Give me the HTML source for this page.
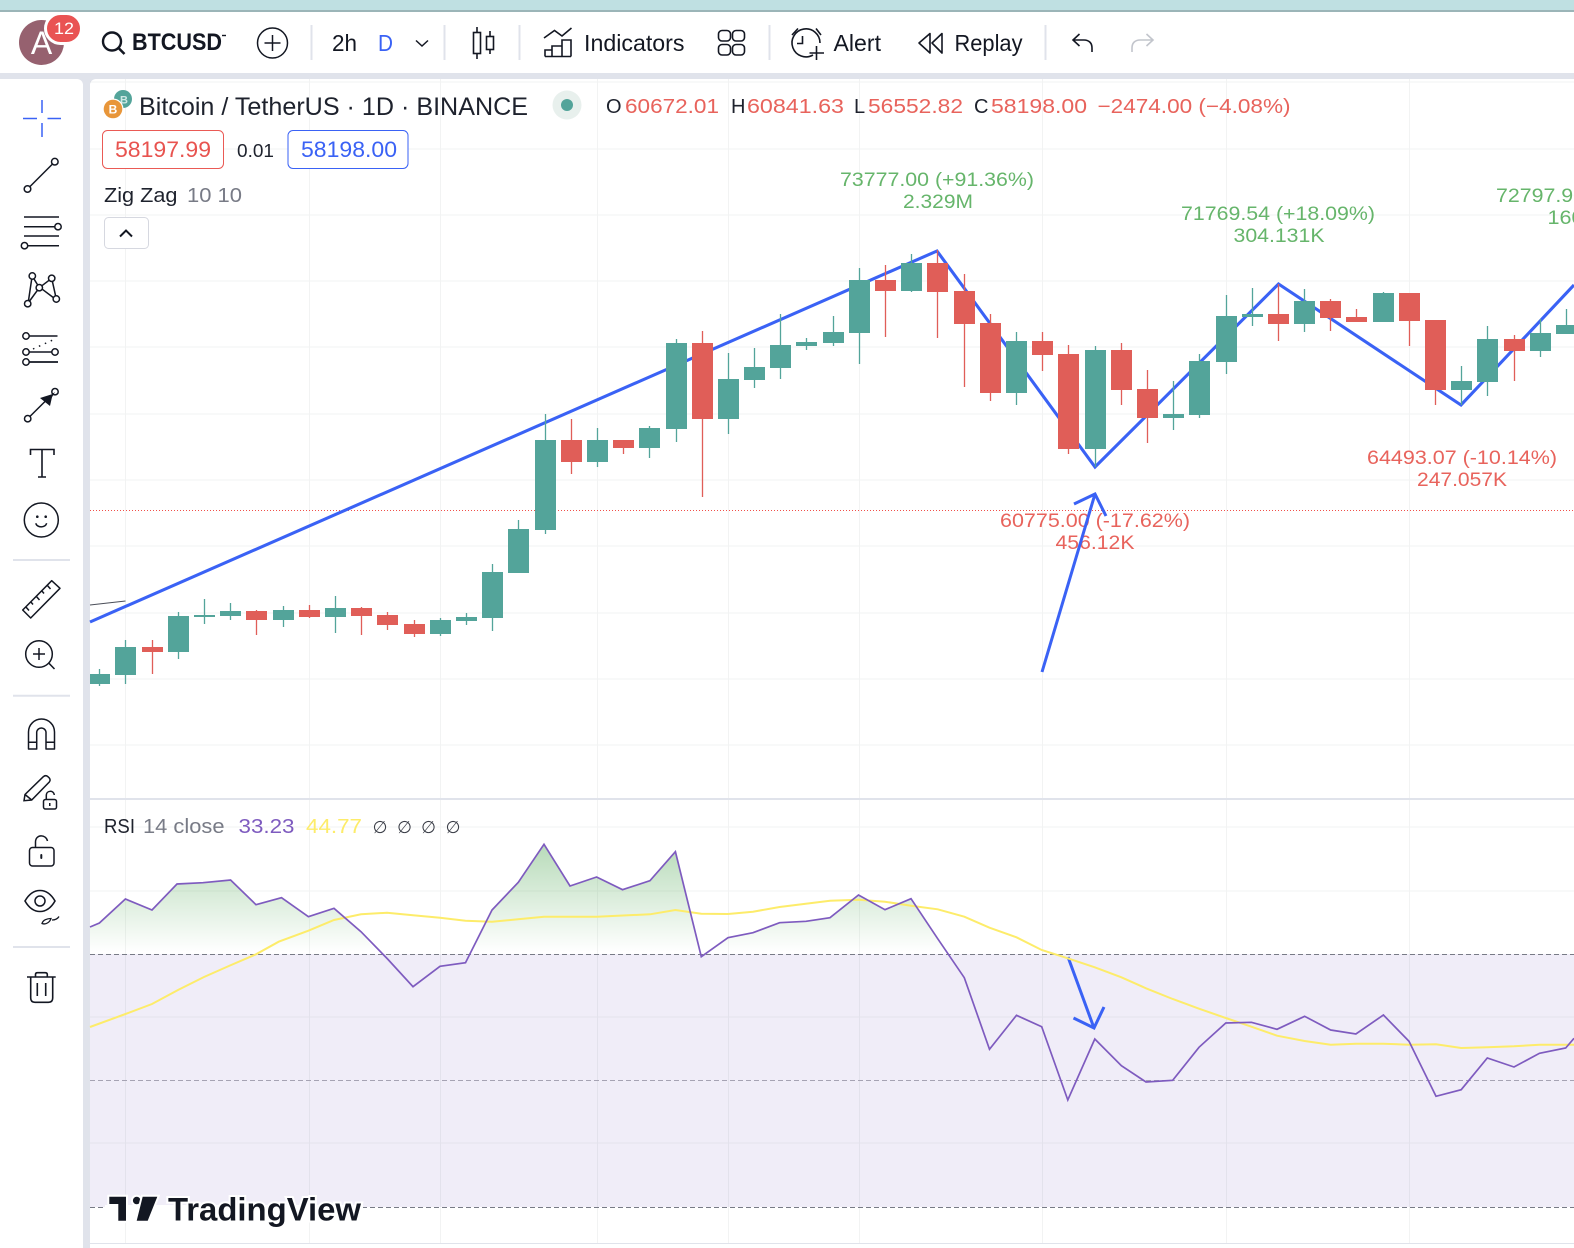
<!DOCTYPE html>
<html><head><meta charset="utf-8"><title>BTCUSD</title>
<style>html,body{margin:0;padding:0;background:#fff;width:1574px;height:1248px;overflow:hidden}svg{display:block}text{font-family:"Liberation Sans",sans-serif}</style></head>
<body>
<svg width="1574" height="1248" viewBox="0 0 1574 1248" xmlns="http://www.w3.org/2000/svg">
<defs><linearGradient id="g" gradientUnits="userSpaceOnUse" x1="0" y1="844" x2="0" y2="952"><stop offset="0" stop-color="#43a047" stop-opacity=".38"/><stop offset="1" stop-color="#43a047" stop-opacity="0"/></linearGradient></defs>
<rect width="1574" height="1248" fill="#fff"/>
<rect width="1574" height="10" fill="#bfe0e2"/><rect y="10" width="1574" height="2" fill="#9bb5b8"/>
<rect y="73" width="1574" height="1175" fill="#e0e3eb"/>
<path d="M0 79H77a6 6 0 0 1 6 6V1248H0Z" fill="#fff"/>
<path d="M90 1248V85a6 6 0 0 1 6-6H1574V1248Z" fill="#fff"/>

<!-- RSI band -->
<rect x="90" y="954" width="1484" height="253" fill="#f0edf8"/>
<!-- grid -->
<path d="M90 82H1574M90 149H1574M90 215H1574M90 281H1574M90 347H1574M90 414H1574M90 480H1574M90 546H1574M90 613H1574M90 679H1574M90 745H1574M90 827H1574M90 891H1574M90 1017H1574M90 1143H1574M125.5 79V1243M309.5 79V1243M440.5 79V1243M597.5 79V1243M728.5 79V1243M859.5 79V1243M1042.5 79V1243M1226.5 79V1243M1409.5 79V1243" stroke="#2a2e39" stroke-opacity=".06" stroke-width="1" fill="none"/>
<rect x="90" y="798" width="1484" height="2" fill="#e0e3eb"/>
<rect x="90" y="1243" width="1484" height="1" fill="#e0e3eb"/>
<path d="M90 510.5H1574" stroke="#f0504a" stroke-width="1" stroke-dasharray="1 2" fill="none"/>
<path d="M90 954.5H1574M90 1207.5H1574" stroke="#787b86" stroke-width="1" stroke-dasharray="5 3" fill="none"/>
<path d="M90 1080.5H1574" stroke="#a6a3b3" stroke-width="1" stroke-dasharray="5 3" fill="none"/>

<!-- zigzag -->
<path d="M90 605L125.5 601" stroke="#4a4e58" stroke-width="1" fill="none"/>
<polyline points="90,622 937,251 1095,467 1278.5,284 1461,405 1574,285" fill="none" stroke="#3a62f5" stroke-width="3.1" stroke-linejoin="miter"/>

<!-- candles: wicks -->
<path stroke="#53a49a" stroke-width="1.3" fill="none" d="M99.5 669V686M125.5 640V684M178.5 612V659M204.5 599V624M230.5 603V620M283.5 606V627M335.5 596V633M440.5 618V636M466.5 613V625M492.5 564V631M518.5 520V573M545.5 414V534M597.5 428V467M649.5 426V458M676.5 339V442M728.5 353V434M754.5 348V388M780.5 314V379M806.5 338V350M833.5 316V346M859.5 268V364M911.5 254V292M1016.5 332V405M1095.5 346V467M1173.5 381V430M1199.5 354V418M1226.5 295V374M1252.5 288V326M1304.5 289V332M1383.5 292V322M1461.5 366V405M1487.5 326V396M1540.5 319V357M1566.5 309V334"/>
<path stroke="#e05e58" stroke-width="1.3" fill="none" d="M152.5 640V674M256.5 610V635M309.5 605V618M361.5 607V635M387.5 612V630M414.5 620V637M571.5 419V474M623.5 440V454M702.5 331V497M885.5 265V337M937.5 250V338M964.5 274V387M990.5 314V401M1042.5 332V371M1068.5 345V454M1121.5 343V405M1147.5 370V443M1278.5 284V341M1330.5 299V331M1356.5 309V322M1409.5 293V346M1435.5 320V405M1514.5 335V381"/>
<!-- candles: bodies -->
<path fill="#53a49a" d="M90 674h20v10h-20zM115 647h21v28h-21zM168 616h21v36h-21zM194 615h21v2h-21zM220 611h21v5h-21zM273 610h21v10h-21zM325 608h21v9h-21zM430 620h21v14h-21zM456 617h21v4h-21zM482 572h21v46h-21zM508 529h21v44h-21zM535 440h21v90h-21zM587 440h21v22h-21zM639 428h21v20h-21zM666 343h21v86h-21zM718 379h21v40h-21zM744 367h21v13h-21zM770 345h21v23h-21zM796 342h21v4h-21zM823 332h21v11h-21zM849 280h21v53h-21zM901 263h21v28h-21zM1006 341h21v52h-21zM1085 350h21v99h-21zM1163 414h21v4h-21zM1189 361h21v54h-21zM1216 316h21v46h-21zM1242 314h21v3h-21zM1294 301h21v23h-21zM1373 293h21v29h-21zM1451 381h21v9h-21zM1477 339h21v43h-21zM1530 333h21v18h-21zM1556 325h18v9h-18z"/>
<path fill="#e05e58" d="M142 647h21v5h-21zM246 611h21v9h-21zM299 610h21v7h-21zM351 608h21v8h-21zM377 615h21v10h-21zM404 624h21v10h-21zM561 440h21v22h-21zM613 440h21v8h-21zM692 343h21v76h-21zM875 280h21v11h-21zM927 263h21v29h-21zM954 291h21v33h-21zM980 323h21v70h-21zM1032 341h21v14h-21zM1058 354h21v95h-21zM1111 350h21v40h-21zM1137 389h21v29h-21zM1268 314h21v10h-21zM1320 301h21v17h-21zM1346 317h21v5h-21zM1399 293h21v28h-21zM1425 320h21v70h-21zM1504 339h21v12h-21z"/>

<!-- labels -->
<g font-size="19.5" fill="#66b56b" text-anchor="middle">
<text x="937" y="186" textLength="194" lengthAdjust="spacingAndGlyphs">73777.00 (+91.36%)</text>
<text x="938" y="208" textLength="70" lengthAdjust="spacingAndGlyphs">2.329M</text>
<text x="1278" y="220" textLength="194" lengthAdjust="spacingAndGlyphs">71769.54 (+18.09%)</text>
<text x="1279" y="242" textLength="91" lengthAdjust="spacingAndGlyphs">304.131K</text>
<text x="1593" y="202" textLength="194" lengthAdjust="spacingAndGlyphs">72797.90 (+19.78%)</text>
<text x="1593" y="224" textLength="91" lengthAdjust="spacingAndGlyphs">160.112K</text>
</g>
<g font-size="19.5" fill="#e8635c" text-anchor="middle">
<text x="1095" y="527" textLength="190" lengthAdjust="spacingAndGlyphs">60775.00 (-17.62%)</text>
<text x="1095" y="549" textLength="79" lengthAdjust="spacingAndGlyphs">456.12K</text>
<text x="1462" y="464" textLength="190" lengthAdjust="spacingAndGlyphs">64493.07 (-10.14%)</text>
<text x="1462" y="486" textLength="90" lengthAdjust="spacingAndGlyphs">247.057K</text>
</g>
<!-- drawn arrows -->
<g fill="none" stroke="#3a62f5" stroke-width="3" stroke-linejoin="miter">
<path d="M1042 672L1095 494M1074 504L1095 494L1106 516"/>
<path d="M1068 957L1094 1028M1073.5 1018L1094 1028L1104 1007"/>
</g>

<!-- RSI fills -->
<polygon fill="url(#g)" points="90,954 90,927 99.4,923 125.4,899 152,910 177,884 203,882.7 230.6,880 256,904.7 281.5,897.7 308.4,916.7 334,908.3 361,931.7 378,954"/>
<polygon fill="url(#g)" points="470,954 492,910 518.3,882.3 544,844.3 570,886 596.6,877 622.5,889.7 650,880.7 675.4,851.7 700.6,954"/>
<polygon fill="url(#g)" points="705,954 728,937.7 753,932.7 779.6,922.7 806,921.3 830,917.7 858.5,895 885,909.7 911,898.7 937.7,938.7 948,954"/>
<polyline fill="none" stroke="#fdec6a" stroke-width="2" points="90,1027 125.5,1014 152,1004 178,990 204,977 230,965.5 256,954.3 278.7,941.7 308.4,930.7 334,920 361,914.3 387,912.7 413,915.3 440,917.7 465.5,920.7 492,921.7 518,919.3 544,916.7 596.6,916.7 650,914.3 675.4,910 701.3,913.7 728,914 753,911.7 779.6,907 830,900.7 858.5,899.7 885,901.7 911,905.7 937.7,909.3 964.3,916.7 989.5,927.7 1016.5,937.3 1041.7,950 1067.8,958.3 1094.8,967.3 1121.4,977.3 1146,988.3 1172.7,999 1199,1008.7 1225.8,1018 1251.4,1026.7 1277,1035.7 1304.6,1041 1330.7,1044.7 1356,1043.7 1383.4,1043.7 1409,1044.7 1436,1044.3 1461.2,1048 1487.3,1047.3 1514,1046.3 1539.5,1044.7 1574,1044.7"/>
<polyline fill="none" stroke="#7e5bbf" stroke-width="1.7" points="90,927 99.4,923 125.4,899 152,910 177,884 203,882.7 230.6,880 256,904.7 281.5,897.7 308.4,916.7 334,908.3 361,931.7 387.6,959 413,986.7 440,966.3 465.5,962.7 492,910 518.3,882.3 544,844.3 570,886 596.6,877 622.5,889.7 650,880.7 675.4,851.7 701.3,956.7 728,937.7 753,932.7 779.6,922.7 806,921.3 830,917.7 858.5,895 885,909.7 911,898.7 937.7,938.7 964.3,977.7 989.5,1049.3 1016.5,1015.3 1041.7,1026.7 1067.8,1100 1094.8,1039 1121.4,1065.7 1146,1082 1172.7,1080.3 1199,1047.3 1225.8,1023 1251.4,1022.3 1277,1029.3 1304.6,1016.3 1330.7,1030 1355.9,1034 1383.4,1015 1409,1041.3 1436,1096.3 1461.2,1089.7 1487.3,1058 1514,1067 1539.5,1053.3 1565.7,1048 1574,1038.3"/>

<!-- TradingView logo -->
<rect x="105" y="1205" width="258" height="5" fill="#fff"/>
<path d="M109.3 1196.7H126V1220.7H118.3V1204H109.3Z" fill="#131722" stroke="#fff" stroke-width="4" paint-order="stroke"/>
<circle cx="136.7" cy="1200.5" r="3.8" fill="#131722" stroke="#fff" stroke-width="4" paint-order="stroke"/>
<path d="M142.7 1196.7H157.3L147.7 1220.7H136.7Z" fill="#131722" stroke="#fff" stroke-width="4" paint-order="stroke"/>
<text x="168" y="1220.7" font-size="32" font-weight="700" fill="#131722" stroke="#fff" stroke-width="4" paint-order="stroke" textLength="193" lengthAdjust="spacingAndGlyphs">TradingView</text>

<!-- legend -->
<circle cx="123" cy="99" r="9" fill="#53a49a"/><text x="124" y="103.5" font-size="11" fill="#cfe8e4" text-anchor="middle" font-weight="700">B</text>
<circle cx="113" cy="109" r="10.5" fill="#fff"/><circle cx="113" cy="109" r="9.3" fill="#e8963a"/><text x="113" y="113.5" font-size="12" fill="#fff" text-anchor="middle" font-weight="700">B</text>
<text x="139" y="115" font-size="25" fill="#1e222d" textLength="389" lengthAdjust="spacingAndGlyphs">Bitcoin / TetherUS · 1D · BINANCE</text>
<circle cx="567" cy="105" r="14.5" fill="#e8f0ed"/><circle cx="567" cy="105" r="6" fill="#53a49a"/>
<g font-size="20">
<text x="606" y="113" fill="#1e222d">O</text><text x="625" y="113" fill="#e8635c" textLength="94" lengthAdjust="spacingAndGlyphs">60672.01</text>
<text x="731" y="113" fill="#1e222d">H</text><text x="747" y="113" fill="#e8635c" textLength="97" lengthAdjust="spacingAndGlyphs">60841.63</text>
<text x="854" y="113" fill="#1e222d">L</text><text x="868" y="113" fill="#e8635c" textLength="95" lengthAdjust="spacingAndGlyphs">56552.82</text>
<text x="974" y="113" fill="#1e222d">C</text><text x="991" y="113" fill="#e8635c" textLength="96" lengthAdjust="spacingAndGlyphs">58198.00</text>
<text x="1097.5" y="113" fill="#e8635c" textLength="193" lengthAdjust="spacingAndGlyphs">−2474.00 (−4.08%)</text>
</g>
<rect x="102.5" y="130.5" width="121" height="38" rx="5" fill="#fff" stroke="#ea5a55"/>
<text x="115" y="157" font-size="22" fill="#e8534f" textLength="96" lengthAdjust="spacingAndGlyphs">58197.99</text>
<text x="237" y="157" font-size="18" fill="#1e222d" textLength="37" lengthAdjust="spacingAndGlyphs">0.01</text>
<rect x="288" y="130.5" width="120" height="38" rx="5" fill="#fff" stroke="#3a62f5"/>
<text x="301" y="157" font-size="22" fill="#3a62f5" textLength="96" lengthAdjust="spacingAndGlyphs">58198.00</text>
<text x="104" y="202" font-size="20" fill="#1e222d" textLength="73.5" lengthAdjust="spacingAndGlyphs">Zig Zag</text>
<text x="187" y="202" font-size="20" fill="#787b86" textLength="55" lengthAdjust="spacingAndGlyphs">10 10</text>
<rect x="104.500" y="217.500" width="44" height="31" rx="4" fill="#fff" stroke="#d6d8e0"/>
<path d="M120 236.500L126 230.500L132 236.500" fill="none" stroke="#131722" stroke-width="2"/>
<text x="104" y="833" font-size="20" fill="#1e222d" textLength="31" lengthAdjust="spacingAndGlyphs">RSI</text>
<text x="143" y="833" font-size="20" fill="#787b86" textLength="81.500" lengthAdjust="spacingAndGlyphs">14 close</text>
<text x="238.500" y="833" font-size="20" fill="#7e5bbf" textLength="56" lengthAdjust="spacingAndGlyphs">33.23</text>
<text x="306" y="833" font-size="20" fill="#fdec6a" textLength="56" lengthAdjust="spacingAndGlyphs">44.77</text>
<g font-size="17" fill="#3a3d47" text-anchor="middle"><text x="380" y="833">∅</text><text x="404.500" y="833">∅</text><text x="428.500" y="833">∅</text><text x="453" y="833">∅</text></g>

<!-- top toolbar -->
<circle cx="41.500" cy="42.500" r="22.500" fill="#96616f"/>
<text x="41.500" y="54" font-size="32" fill="#fff" text-anchor="middle">A</text>
<rect x="45.500" y="13.500" width="36" height="30" rx="15" fill="#e95353" stroke="#fff" stroke-width="3"/>
<text x="64" y="34" font-size="17" fill="#fff" text-anchor="middle" textLength="20" lengthAdjust="spacingAndGlyphs">12</text>
<circle cx="112" cy="41.500" r="9" fill="none" stroke="#131722" stroke-width="2.400"/><path d="M118.500 48L124.500 54" stroke="#131722" stroke-width="2.600"/>
<text x="132" y="50" font-size="24" font-weight="700" fill="#131722" textLength="90" lengthAdjust="spacingAndGlyphs">BTCUSD</text>
<path d="M222 35.500H226" stroke="#131722" stroke-width="1.400"/>
<circle cx="272.500" cy="43" r="15" fill="none" stroke="#131722" stroke-width="1.500"/><path d="M272.500 35V51M264.500 43H280.500" stroke="#131722" stroke-width="1.500"/>
<path d="M311.500 25V60M444.500 25V60M519.500 25V60M769.500 25V60M1045.500 25V60" stroke="#e0e3eb" stroke-width="2"/>
<text x="332" y="51" font-size="23" fill="#131722" textLength="25" lengthAdjust="spacingAndGlyphs">2h</text>
<text x="378" y="51" font-size="23" fill="#3a62f5" textLength="15" lengthAdjust="spacingAndGlyphs">D</text>
<path d="M416 40.500L422 46L428 40.500" fill="none" stroke="#131722" stroke-width="1.500"/>
<g fill="none" stroke="#131722" stroke-width="1.600">
<rect x="473.500" y="32.500" width="7" height="21"/><path d="M477 27V32M477 54V59"/>
<rect x="486.500" y="36.500" width="7" height="13"/><path d="M490 31V36M490 50V54"/>
<path d="M544 38L554.500 30.500L562 36L571.500 28"/>
<path d="M545 56.500V50H552V56.500M552 56.500V46H562V56.500M562 56.500V40H571V56.500M545 56.500H571"/>
<rect x="718.500" y="30.500" width="12" height="10.500" rx="3.500"/><rect x="732.500" y="30.500" width="12" height="10.500" rx="3.500"/><rect x="718.500" y="44.500" width="12" height="10.500" rx="3.500"/><rect x="732.500" y="44.500" width="12" height="10.500" rx="3.500"/>
<path d="M813 55A14 14 0 1 1 820 43M802.500 36V43.500H797M792 35L798 28.500M816 28.500L821 35M816.500 46V60M809.500 53H824"/>
<path d="M930 33.500L919 43L930 53ZM942 33.500L932 43L942 53Z" stroke-linejoin="round"/>
<path d="M1092 52V48C1092 43 1089 40 1084 40H1073M1079.500 34L1073 40L1079.500 46"/>
<path stroke="#c2c5cc" d="M1132 52V48C1132 43 1135 40 1140 40H1153M1146.500 34L1153 40L1146.500 46"/>
</g>
<text x="584" y="51" font-size="23" fill="#131722" textLength="100.500" lengthAdjust="spacingAndGlyphs">Indicators</text>
<text x="833.500" y="51" font-size="23" fill="#131722" textLength="47.500" lengthAdjust="spacingAndGlyphs">Alert</text>
<text x="954.500" y="51" font-size="23" fill="#131722" textLength="68" lengthAdjust="spacingAndGlyphs">Replay</text>

<!-- left toolbar -->
<path d="M42 100V113M42 123V137M23 118.500H37M47.500 118.500H61" stroke="#3a62f5" stroke-width="1.500" fill="none"/>
<g fill="none" stroke="#131722" stroke-width="1.500">
<circle cx="54.800" cy="161.700" r="3.300"/><circle cx="27.500" cy="189" r="3.300"/><path d="M52.400 164.100L29.900 186.600"/>
<path d="M24 217H59M24 226.700H54.500M24 236H59M28 245.700H59"/><circle cx="58" cy="226.700" r="3.200"/><circle cx="24.500" cy="245.700" r="3.200"/>
<circle cx="32.300" cy="276" r="3.200"/><circle cx="51.700" cy="278.300" r="3.200"/><circle cx="39.300" cy="287.700" r="3.200"/><circle cx="27.700" cy="303.700" r="3.200"/><circle cx="56.300" cy="299" r="3.200"/>
<path d="M28.500 300.600L31.700 279M33.900 278.800L37.700 285M41.800 285.800L49.200 280.200M52.400 281.400L55.600 295.800M53.400 297.600L42.200 289.200M37.400 290.300L29.600 301"/>
<circle cx="26" cy="336" r="3.200"/><path d="M29.200 336H57.500"/><path d="M33 349L55 339" stroke-dasharray="1.500 5"/>
<circle cx="26" cy="352" r="3.200"/><circle cx="55" cy="352" r="3.200"/><path d="M29.200 352H51.800"/>
<circle cx="26" cy="362" r="3.200"/><path d="M29.200 362H58" stroke-width="1.800"/>
<circle cx="27.700" cy="418.700" r="3.200"/><circle cx="55" cy="391.700" r="3.200"/><path d="M30 416.400L45 401.500"/>
<path d="M30.500 455V449.500H54V455M42 449.500V477M38 477H46" stroke-width="1.600"/>
<circle cx="41.300" cy="520" r="17"/><path d="M35.700 523.300C37.500 528 45 528 46.700 523.300"/>
<path d="M51.700 580.700L60 588.300L30.700 618L22.700 610ZM47 585L50.500 589M41.500 590.500L44 593.500M36 596L39.500 600M30.500 601.500L33 604.500M25.500 606.500L29 610.500" stroke-linejoin="round"/>
<circle cx="39" cy="654" r="13.300"/><path d="M39 648V660M33 654H45M49 663.300L54.500 669"/>
<path d="M28.500 749V732A13 13 0 0 1 54.500 732V749H46V732A4.700 4.700 0 0 0 36.700 732V749ZM28.500 742.300H36.700M46 742.300H54.500" stroke-linejoin="round"/>
<path d="M24 800.700L25 794.500L43.300 776.700C45 775.300 46.500 775.500 47.800 776.600L49.300 778C50.300 779.300 50.400 780.600 49.300 782L31.700 800ZM25 794.500L31.700 800"/>
<rect x="43.500" y="799.500" width="13" height="9.500" rx="2"/><path d="M46.300 799.500V795.500C46.300 790 54 790 54.300 795"/>
<rect x="29.500" y="847.500" width="24.500" height="18.500" rx="3"/><path d="M35.500 847.500V842C35.500 834 46 834 47.500 841"/>
<path d="M25 901C33 887 47 887 55 901C47 915 33 915 25 901Z" stroke-width="1.600"/><circle cx="40" cy="901" r="5"/>
<path d="M42 923.500C43 920 47 918.500 51 918.500C50 922 46 925 42 923.500ZM52 920C55 920 57.500 919 59 916.500" stroke-width="1.300"/>
<path d="M27 977H55.700M35.500 977V974.500Q35.500 972.700 37.500 972.700H45Q47.300 972.700 47.300 974.500V977M30.700 977V998Q30.700 1002.300 35 1002.300H48.400Q52.700 1002.300 52.700 998V977M37.300 983V996M45.700 983V996" stroke-width="1.600"/>
</g>
<circle cx="37.300" cy="516.700" r="1.300" fill="#131722"/><circle cx="45.700" cy="516.700" r="1.300" fill="#131722"/>
<path d="M52.700 394L40 398L50 406Z" fill="#131722"/><path d="M55 392L44 400L48 404Z" fill="#131722"/>
<rect x="40.300" y="854" width="2" height="5" rx="1" fill="#131722"/><rect x="49" y="803" width="1.500" height="3" fill="#131722"/>
<path d="M13 560H70M13 695.700H70M13 947H70" stroke="#e0e3eb" stroke-width="2"/>
</svg>
</body></html>
